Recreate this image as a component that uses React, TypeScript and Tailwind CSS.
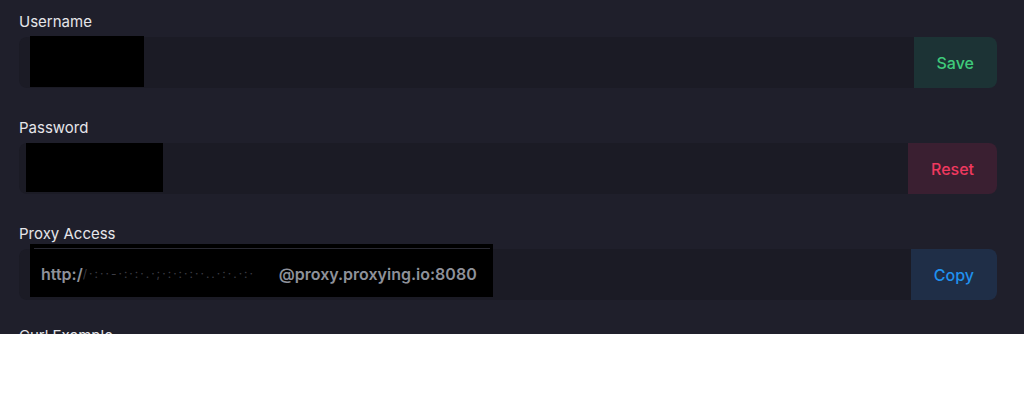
import React from "react";

type Tone = "green" | "red" | "blue";

const toneClass: Record<Tone, string> = {
  green: "bg-[#1c3335] text-[#3fca7b]",
  red: "bg-[#3a1f31] text-[#f0395f]",
  blue: "bg-[#1f2e47] text-[#1f91ee]",
};

function Field({
  label,
  action,
  tone,
  className = "",
  children,
}: {
  label: string;
  action: string;
  tone: Tone;
  className?: string;
  children: React.ReactNode;
}) {
  return (
    <div className={`flex flex-col ${className}`}>
      <label className="mb-[5px] text-[15px] leading-5 text-[#e6e6ea]">{label}</label>
      <div className="flex h-[51px]">
        <div className="flex flex-1 rounded-l-lg bg-[#1b1b25]">{children}</div>
        <button
          className={`rounded-r-lg px-[23px] text-[16px] font-medium ${toneClass[tone]}`}
        >
          {action}
        </button>
      </div>
    </div>
  );
}

export default function App() {
  return (
    <div className="h-[334px] overflow-hidden bg-[#1f1f2b] pl-[19px] pr-[27px] pt-[12px] font-['Inter',sans-serif]">
      <div className="flex flex-col gap-[30px]">
        <Field label="Username" action="Save" tone="green">
          <div className="ml-[11px] mt-[-1px] h-[51px] w-[114px] bg-black" />
        </Field>

        <Field label="Password" action="Reset" tone="red">
          <div className="ml-[7px] h-[49px] w-[137px] bg-black" />
        </Field>

        <Field label="Proxy Access" action="Copy" tone="blue">
          <div className="relative ml-[11px] mt-[-5px] flex h-[53px] w-[463px] items-center overflow-hidden whitespace-nowrap bg-black pl-[11px] pt-[6px] text-[16px] font-semibold text-[#8e919a]">
            <div className="absolute left-[4px] top-[4px] h-px w-[456px] bg-[#2a2a33]" />
            <span className="shrink-0">http:/</span>
            <span className="w-[196px] shrink-0 overflow-hidden text-[12px] font-normal tracking-[2px] text-[#3c3c44]">
              /·:··-·:·:·.·;·:·:·:··..·:·.·:·
            </span>
            <span className="shrink-0">@proxy.proxying.io:8080</span>
          </div>
        </Field>

        <Field label="Curl Example" action="Copy" tone="blue" className="mt-[-4px]">
          <div />
        </Field>
      </div>
    </div>
  );
}
